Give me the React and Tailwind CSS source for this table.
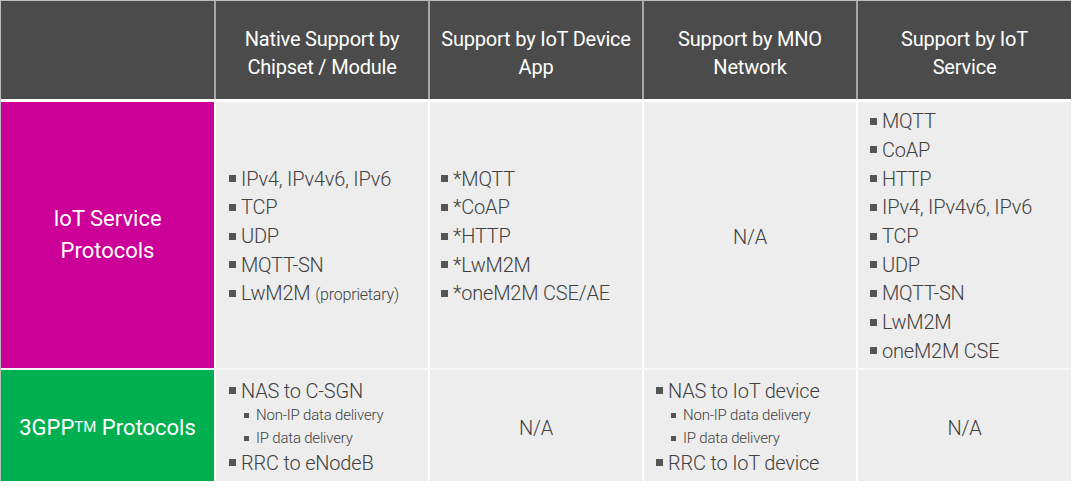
import React from 'react';

const font = { fontFamily: 'Roboto, "Liberation Sans", sans-serif' };

const Bullet = ({ children, small }) => (
    <div className={small ? 'flex items-center h-[23px] pl-[15px] text-[15px]' : 'flex items-center h-[28.7px] text-[20px]'}>
        <span className={small ? 'w-[5px] h-[5px] bg-[#555555] mr-[7px] shrink-0' : 'w-[7px] h-[7px] bg-[#555555] mr-[5px] shrink-0'}></span>
        <span className="whitespace-nowrap">{children}</span>
    </div>
);

const SubList = ({ main1, subs, main2 }) => (
    <div className="flex flex-col">
        <div className="flex items-center h-[26px] text-[20px]">
            <span className="w-[7px] h-[7px] bg-[#555555] mr-[5px] shrink-0"></span>
            <span className="whitespace-nowrap">{main1}</span>
        </div>
        {subs.map((s) => (
            <Bullet key={s} small>{s}</Bullet>
        ))}
        <div className="flex items-center h-[26px] text-[20px]">
            <span className="w-[7px] h-[7px] bg-[#555555] mr-[5px] shrink-0"></span>
            <span className="whitespace-nowrap">{main2}</span>
        </div>
    </div>
);

const headers = [
    ['Native Support by', 'Chipset / Module'],
    ['Support by IoT Device', 'App'],
    ['Support by MNO', 'Network'],
    ['Support by IoT', 'Service'],
];

const cols = 'grid grid-cols-[213px_212px_212px_212px_213px] gap-x-[2px]';

export default function App() {
    return (
        <div className="w-[1075px] h-[492px] bg-white" style={font}>
            <div className="w-[1071px] border-t border-l border-[#bdbdbd]">
                {/* header */}
                <div className={`${cols} bg-[#a6a6a6] h-[98px]`}>
                    <div className="bg-[#4b4b4b]"></div>
                    {headers.map((h) => (
                        <div key={h[0]} className="bg-[#4b4b4b] flex flex-col items-center justify-center pt-[5px] text-white text-[20px] leading-[28px] tracking-[-0.2px]">
                            <span>{h[0]}</span>
                            <span>{h[1]}</span>
                        </div>
                    ))}
                </div>

                <div className="h-[3px] bg-white"></div>

                {/* IoT service protocols */}
                <div className={`${cols} bg-white h-[266px] text-[#404040] font-light tracking-[-0.2px]`}>
                    <div className="bg-[#cc0099] flex flex-col items-center justify-center text-white text-[22px] leading-[32px] font-normal tracking-normal">
                        <span>IoT Service</span>
                        <span>Protocols</span>
                    </div>
                    <div className="bg-[#ededed] flex flex-col justify-center pl-[13px] pt-[2px]">
                        <Bullet>IPv4, IPv4v6, IPv6</Bullet>
                        <Bullet>TCP</Bullet>
                        <Bullet>UDP</Bullet>
                        <Bullet>MQTT-SN</Bullet>
                        <Bullet>
                            LwM2M <span className="text-[16px]">(proprietary)</span>
                        </Bullet>
                    </div>
                    <div className="bg-[#ededed] flex flex-col justify-center pl-[11px] pt-[2px]">
                        <Bullet>*MQTT</Bullet>
                        <Bullet>*CoAP</Bullet>
                        <Bullet>*HTTP</Bullet>
                        <Bullet>*LwM2M</Bullet>
                        <Bullet>*oneM2M CSE/AE</Bullet>
                    </div>
                    <div className="bg-[#ededed] flex items-center justify-center text-[20px] pt-[4px]">N/A</div>
                    <div className="bg-[#ededed] flex flex-col justify-center pl-[12px] pt-[2px]">
                        <Bullet>MQTT</Bullet>
                        <Bullet>CoAP</Bullet>
                        <Bullet>HTTP</Bullet>
                        <Bullet>IPv4, IPv4v6, IPv6</Bullet>
                        <Bullet>TCP</Bullet>
                        <Bullet>UDP</Bullet>
                        <Bullet>MQTT-SN</Bullet>
                        <Bullet>LwM2M</Bullet>
                        <Bullet>oneM2M CSE</Bullet>
                    </div>
                </div>

                <div className="h-[2px] bg-[#f7f7f7]"></div>

                {/* 3GPP protocols */}
                <div className={`${cols} bg-white h-[111px] text-[#404040] font-light tracking-[-0.2px]`}>
                    <div className="bg-[#00b050] flex items-center justify-center text-white text-[22px] pt-[4px] font-normal tracking-normal">
                        <span>
                            3GPP<sup className="text-[15px] relative top-[-3px]">TM</sup> Protocols
                        </span>
                    </div>
                    <div className="bg-[#ededed] flex flex-col justify-center pl-[13px] pt-[2px]">
                        <SubList main1="NAS to C-SGN" subs={['Non-IP data delivery', 'IP data delivery']} main2="RRC to eNodeB" />
                    </div>
                    <div className="bg-[#ededed] flex items-center justify-center text-[20px] pt-[4px]">N/A</div>
                    <div className="bg-[#ededed] flex flex-col justify-center pl-[12px] pt-[2px]">
                        <SubList main1="NAS to IoT device" subs={['Non-IP data delivery', 'IP data delivery']} main2="RRC to IoT device" />
                    </div>
                    <div className="bg-[#ededed] flex items-center justify-center text-[20px] pt-[4px]">N/A</div>
                </div>
            </div>
        </div>
    );
}
